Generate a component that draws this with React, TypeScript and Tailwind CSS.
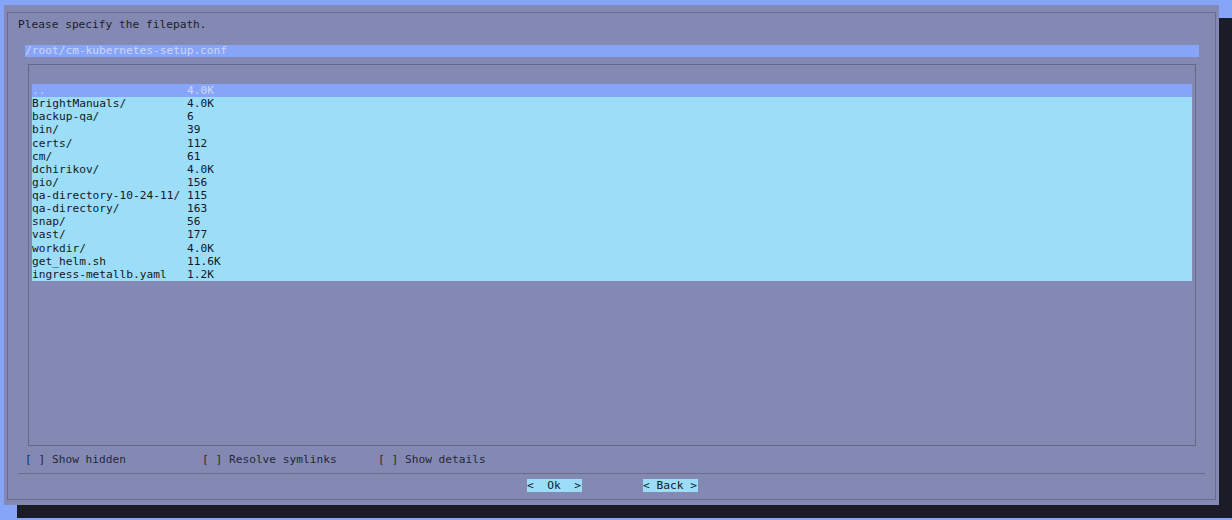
import React from "react";

const rows: [string, string][] = [
  ["BrightManuals/", "4.0K"],
  ["backup-qa/", "6"],
  ["bin/", "39"],
  ["certs/", "112"],
  ["cm/", "61"],
  ["dchirikov/", "4.0K"],
  ["gio/", "156"],
  ["qa-directory-10-24-11/", "115"],
  ["qa-directory/", "163"],
  ["snap/", "56"],
  ["vast/", "177"],
  ["workdir/", "4.0K"],
  ["get_helm.sh", "11.6K"],
  ["ingress-metallb.yaml", "1.2K"],
];

export default function App() {
  return (
    <div
      className="w-[1232px] h-[520px] bg-[#87a5f8] pt-[5px] pl-[4px] overflow-hidden text-[11.2px] leading-[13px]"
      style={{ fontFamily: '"DejaVu Sans Mono", "Liberation Mono", monospace' }}
    >
      <div className="w-[1215px] h-[500px] bg-[#8489b4] shadow-[13px_13px_0_#1b1c27] pt-[7px] pb-[5px] px-[3px]">
        <div className="h-[488px] border border-[#686c8f] flex flex-col">
          <div className="mt-[5px] h-[13px] pl-[10px] text-[#1c1d2a] whitespace-pre">
            Please specify the filepath.
          </div>
          <div className="mt-[14px] ml-[17px] w-[1174px] h-[12px] bg-[#87a5f8] text-[#cdd6f9] leading-[12px] whitespace-pre">
            /root/cm-kubernetes-setup.conf
          </div>
          <div className="mt-[7px] ml-[20px] w-[1168px] h-[382px] border border-[#63678a] pt-[19px] px-[3px]">
            <div className="flex h-[13.13px] leading-[13.13px] bg-[#87a5f8] text-[#cdd6f9] whitespace-pre">
              <span className="w-[155px]">..</span>
              <span>4.0K</span>
            </div>
            {rows.map(([n, s]) => (
              <div
                key={n}
                className="flex h-[13.13px] leading-[13.13px] bg-[#9cdef8] text-[#15161f] whitespace-pre"
              >
                <span className="w-[155px]">{n}</span>
                <span>{s}</span>
              </div>
            ))}
          </div>
          <div className="mt-[7px] ml-[17px] h-[13px] flex text-[#25273a] whitespace-pre">
            <span className="w-[177px]">[ ] Show hidden</span>
            <span className="w-[176px]">[ ] Resolve symlinks</span>
            <span>[ ] Show details</span>
          </div>
          <div className="mt-[7px] ml-[10px] w-[1187px] h-px bg-[#686c8f]" />
          <div className="mt-[5px] h-[13px] flex justify-center gap-[61px] pl-[2px] whitespace-pre text-[#15161f]">
            <span className="bg-[#9cdef8] w-[55px]">{"<  Ok  >"}</span>
            <span className="bg-[#9cdef8] w-[55px]">{"< Back >"}</span>
          </div>
        </div>
      </div>
    </div>
  );
}
